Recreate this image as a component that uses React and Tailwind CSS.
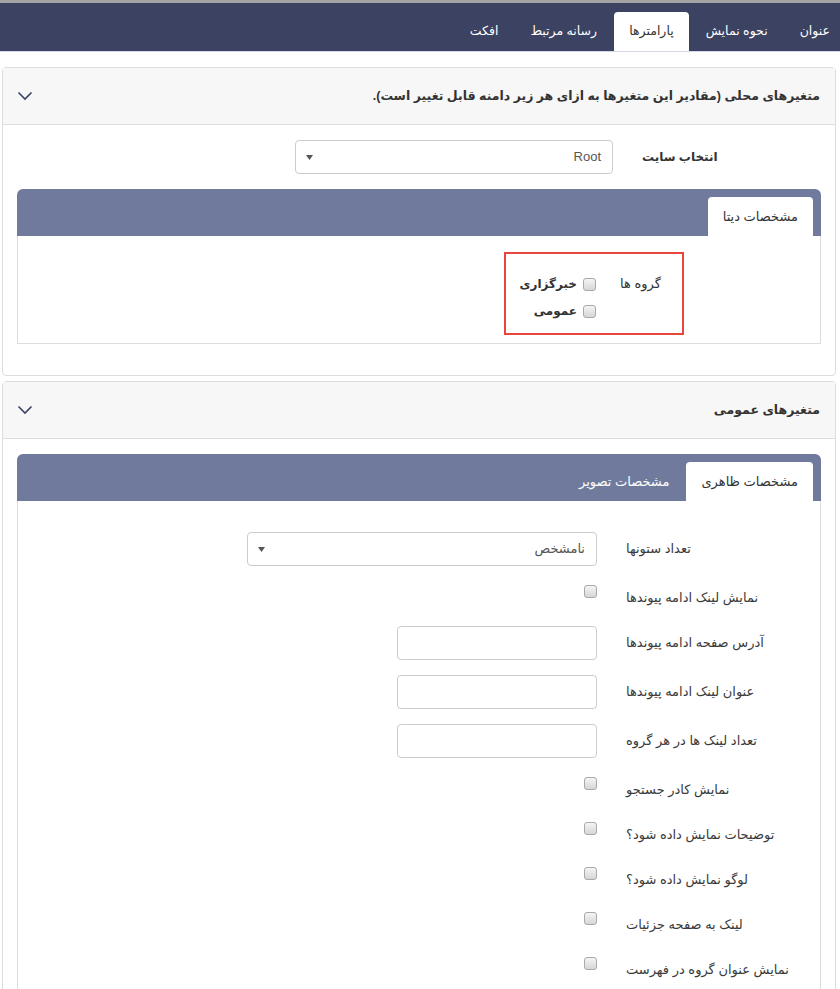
import React from 'react';

const FONT = "font-['Liberation_Sans','DejaVu_Sans',sans-serif]";

const Checkbox = () => (
  <span className="block h-[13px] w-[13px] shrink-0 rounded-[3px] border border-[#a9a9a9] bg-linear-to-b from-[#f5f5f5] to-[#d6d6d6]" />
);

const Chevron = () => (
  <svg width="16" height="10" viewBox="0 0 16 10">
    <path d="M1.5 1.5 L8 8 L14.5 1.5" fill="none" stroke="#3b4262" strokeWidth="1.6" />
  </svg>
);

const Caret = () => (
  <svg width="7" height="5" viewBox="0 0 7 5">
    <path d="M0 0 H7 L3.5 5 Z" fill="#555" />
  </svg>
);

const SelectBox = ({ value, className }) => (
  <div className={`flex h-[34px] items-center justify-between rounded-[4px] border border-[#ccc] pr-[11px] pl-[10px] text-[13px] text-[#555] ${className}`}>
    <span>{value}</span>
    <Caret />
  </div>
);

const TextBox = () => (
  <div className="h-[34px] w-[200px] rounded-[4px] border border-[#ccc] bg-white" />
);

const PanelHeader = ({ title }) => (
  <header className="flex h-[57px] items-center justify-between border-b border-[#ddd] bg-[#f7f7f7] pr-[15px] pl-[14px]">
    <h2 className="text-[12.5px] font-bold text-[#333]">{title}</h2>
    <Chevron />
  </header>
);

const TabBar = ({ tabs }) => (
  <div className="flex h-[47px] items-end rounded-t-[6px] bg-[#6f7a9c] pr-[8px]">
    {tabs.map((t, i) =>
      i === 0 ? (
        <div key={t} className="flex h-[39px] items-center rounded-t-[4px] bg-white px-[15px] text-[13px] text-[#333]">
          {t}
        </div>
      ) : (
        <div key={t} className="mr-[2px] flex h-[39px] items-center px-[15px] text-[13px] text-white">
          {t}
        </div>
      )
    )}
  </div>
);

// rows of the general settings form
const rows = [
  { label: 'تعداد ستونها', type: 'select' },
  { label: 'نمایش لینک ادامه پیوندها', type: 'check' },
  { label: 'آدرس صفحه ادامه پیوندها', type: 'text' },
  { label: 'عنوان لینک ادامه پیوندها', type: 'text' },
  { label: 'تعداد لینک ها در هر گروه', type: 'text' },
  { label: 'نمایش کادر جستجو', type: 'check' },
  { label: 'توضیحات نمایش داده شود؟', type: 'check' },
  { label: 'لوگو نمایش داده شود؟', type: 'check' },
  { label: 'لینک به صفحه جزئیات', type: 'check' },
  { label: 'نمایش عنوان گروه در فهرست', type: 'check' },
];

const FormRow = ({ label, type }) => (
  <div className={`mb-[15px] flex gap-[29px] ${type === 'check' ? 'h-[30px]' : 'h-[34px]'}`}>
    <div className="w-[188px] shrink-0 whitespace-nowrap pt-[7px] text-left text-[13px] leading-[20px] text-[#3a3a3a]">
      {label}
    </div>
    <div className="flex flex-1 items-start">
      {type === 'select' && <SelectBox value="نامشخص" className="w-[350px]" />}
      {type === 'text' && <TextBox />}
      {type === 'check' && (
        <div className="mt-[4px]">
          <Checkbox />
        </div>
      )}
    </div>
  </div>
);

const navTabs = ['عنوان', 'نحوه نمایش', 'پارامترها', 'رسانه مرتبط', 'افکت'];

export default function App() {
  return (
    <div dir="rtl" className={`min-h-screen bg-white ${FONT}`}>
      {/* top tabs */}
      <nav className="flex h-[52px] items-end overflow-hidden border-t-[3px] border-b border-t-[#a3a3a3] border-b-[#d5d8ea] bg-[#3b4262]">
        {navTabs.map((t, i) => (
          <div
            key={t}
            className={`ml-[2px] flex h-[39px] items-center text-[12.5px] ${
              i === 0 ? 'pr-[10px] pl-[15px]' : 'px-[15px]'
            } ${i === 2 ? 'rounded-t-[4px] bg-white text-[#333]' : 'text-white'}`}
          >
            {t}
          </div>
        ))}
      </nav>

      {/* local variables */}
      <section className="mt-[15px] mr-[4px] ml-[2px] rounded-[4px] border border-[#ddd] bg-white">
        <PanelHeader title="متغیرهای محلی (مقادیر این متغیرها به ازای هر زیر دامنه قابل تغییر است)." />
        <div className="px-[14px] pt-[15px] pb-[31px]">
          <div className="mb-[15px] flex h-[34px] gap-[29px] pr-[6px]">
            <div className="w-[173px] shrink-0 whitespace-nowrap pt-[7px] text-left text-[12px] font-bold leading-[20px] text-[#333]">
              انتخاب سایت
            </div>
            <SelectBox value="Root" className="w-[318px]" />
          </div>

          <TabBar tabs={['مشخصات دیتا']} />
          <div className="flex border border-t-0 border-[#ddd] pt-[16px] pr-[136px] pb-[8px]">
            <div className="flex h-[83px] w-[180px] gap-[24px] border-2 border-[#e8453c]">
              <div className="w-[62px] shrink-0 pt-[20px] text-left text-[13px] leading-[20px] text-[#333]">
                گروه ها
              </div>
              <div className="flex flex-col gap-[7px] pt-[20px]">
                <div className="flex h-[20px] items-center gap-[6px] text-[12px] font-bold text-[#333]">
                  <Checkbox />
                  <span>خبرگزاری</span>
                </div>
                <div className="flex h-[20px] items-center gap-[6px] text-[12px] font-bold text-[#333]">
                  <Checkbox />
                  <span>عمومی</span>
                </div>
              </div>
            </div>
          </div>
        </div>
      </section>

      {/* general variables */}
      <section className="mt-[5px] mr-[4px] ml-[2px] rounded-[4px] border border-[#ddd] bg-white">
        <PanelHeader title="متغیرهای عمومی" />
        <div className="px-[14px] pt-[15px] pb-[15px]">
          <TabBar tabs={['مشخصات ظاهری', 'مشخصات تصویر']} />
          <div className="border border-t-0 border-[#ddd] pt-[31px] pr-[6px]">
            {rows.map((r) => (
              <FormRow key={r.label} {...r} />
            ))}
          </div>
        </div>
      </section>
    </div>
  );
}
